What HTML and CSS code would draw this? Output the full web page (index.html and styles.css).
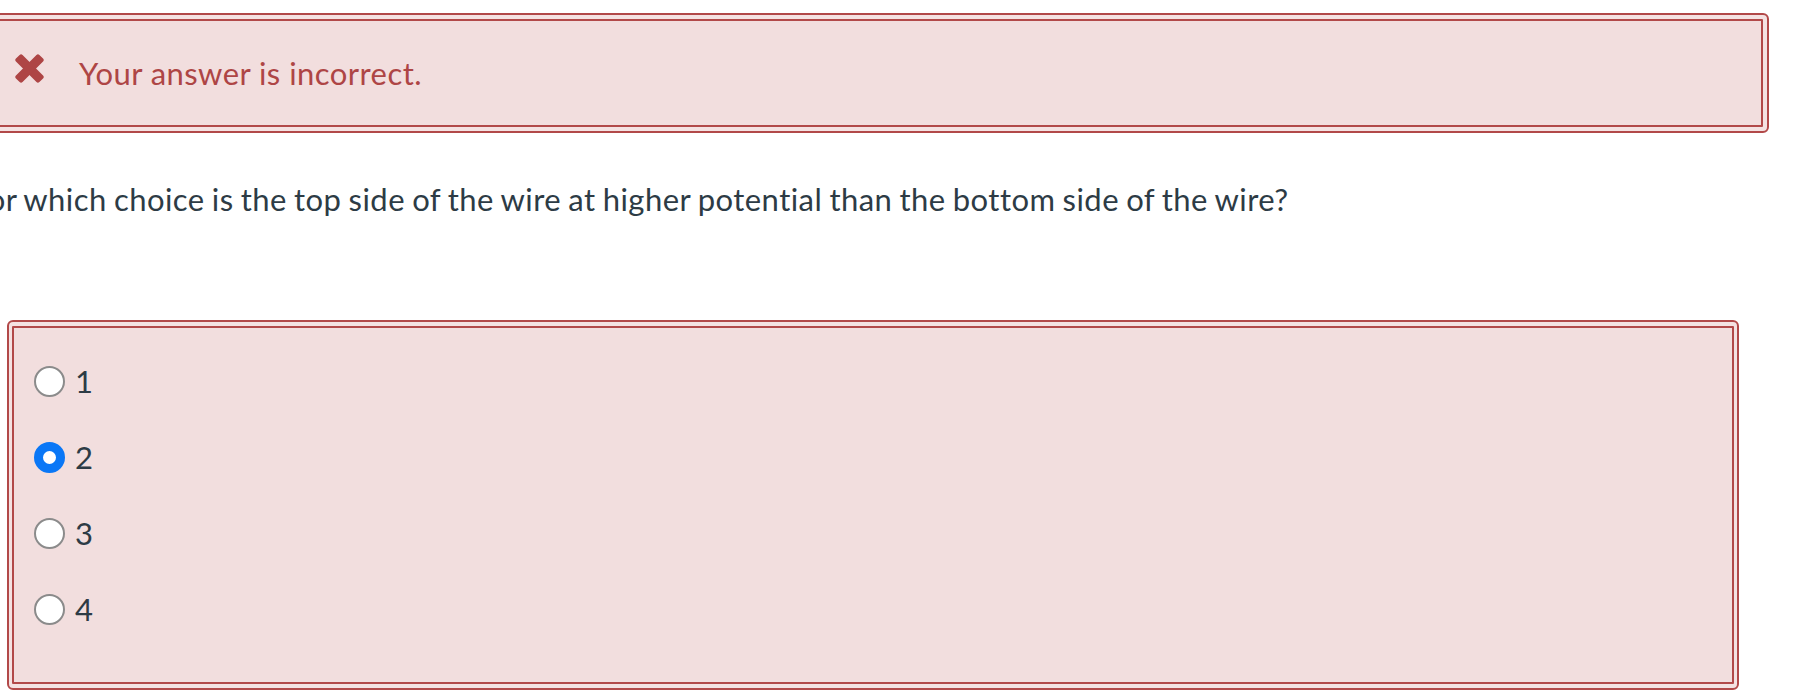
FILE: index.html
```html
<!DOCTYPE html>
<html lang="en">
  <head>
    <meta charset="UTF-8" />
    <meta name="viewport" content="width=device-width, initial-scale=1.0" />
    <title>Quiz question</title>
    <link rel="stylesheet" href="styles.css">
  </head>

  <body>
    <div class="pagina">
      <div class="alerta">
        <div class="alerta-corpo">
          <svg class="icone-erro" viewBox="0 0 28 28" aria-hidden="true">
            <rect x="-2" y="9.5" width="32" height="9" rx="2" transform="rotate(45 14 14)" />
            <rect x="-2" y="9.5" width="32" height="9" rx="2" transform="rotate(-45 14 14)" />
          </svg>
          <span>Your answer is incorrect.</span>
        </div>
      </div>

      <p class="pergunta">For which choice is the top side of the wire at higher potential than the bottom side of the wire?</p>

      <div class="respostas">
        <div class="respostas-corpo">
          <label class="opcao"><span class="radio"></span><span>1</span></label>
          <label class="opcao"><span class="radio marcado"></span><span>2</span></label>
          <label class="opcao"><span class="radio"></span><span>3</span></label>
          <label class="opcao"><span class="radio"></span><span>4</span></label>
        </div>
      </div>
    </div>
  </body>
</html>
```

FILE: styles.css
```css
* {
  margin: 0;
  padding: 0;
  box-sizing: border-box;
}

body {
  font-family: Lato, "Open Sans", sans-serif;
  font-size: 31px;
  letter-spacing: 0.45px;
  font-variant-ligatures: none;
  color: #2d3b45;
  background: #fff;
  overflow: hidden;
}

.pagina {
  padding-top: 13px;
}

/* caixa de aviso */
.alerta {
  width: 1799px;
  margin-left: -30px;
  padding: 4px;
  border: 2px solid #b24949;
  border-radius: 6px;
  background-color: #f4e2e2;
}

.alerta-corpo {
  display: flex;
  align-items: center;
  column-gap: 35px;
  height: 108px;
  padding-left: 37px;
  border: 2px solid #b24949;
  border-radius: 1px;
  background-color: #f2dede;
  color: #ae4545;
}

.icone-erro {
  width: 29px;
  height: 29px;
  margin-bottom: 10px;
  fill: #ae4545;
}

.pergunta {
  margin: 48px 0 0 -29px;
  line-height: 36px;
  word-spacing: -1.2px;
  white-space: nowrap;
}

/* alternativas */
.respostas {
  width: 1732px;
  margin: 103px 0 0 7px;
  padding: 4px 3px;
  border: 2px solid #b24949;
  border-radius: 6px;
  background-color: #f4e2e2;
}

.respostas-corpo {
  display: flex;
  flex-direction: column;
  padding: 15px 20px 35px;
  border: 2px solid #b24949;
  border-radius: 1px;
  background-color: #f2dede;
}

.opcao {
  display: flex;
  align-items: center;
  column-gap: 10px;
  height: 76px;
  line-height: 36px;
}

.radio {
  width: 31px;
  height: 31px;
  border: 2.5px solid #8b8b8b;
  border-radius: 50%;
  background-color: #fff;
}

.radio.marcado {
  border: 9.5px solid #0a77f6;
}
```
